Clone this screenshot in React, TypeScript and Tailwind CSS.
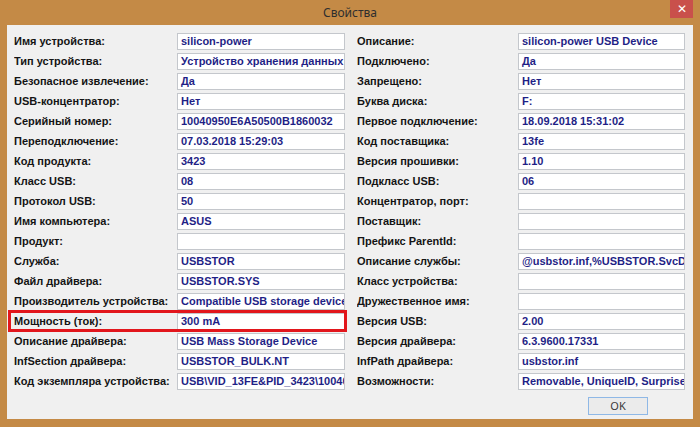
import React from "react";

type Row = { label: string; value: string };

const left: Row[] = [
  { label: "Имя устройства:", value: "silicon-power" },
  { label: "Тип устройства:", value: "Устройство хранения данных" },
  { label: "Безопасное извлечение:", value: "Да" },
  { label: "USB-концентратор:", value: "Нет" },
  { label: "Серийный номер:", value: "10040950E6A50500B1860032" },
  { label: "Переподключение:", value: "07.03.2018 15:29:03" },
  { label: "Код продукта:", value: "3423" },
  { label: "Класс USB:", value: "08" },
  { label: "Протокол USB:", value: "50" },
  { label: "Имя компьютера:", value: "ASUS" },
  { label: "Продукт:", value: "" },
  { label: "Служба:", value: "USBSTOR" },
  { label: "Файл драйвера:", value: "USBSTOR.SYS" },
  { label: "Производитель устройства:", value: "Compatible USB storage device" },
  { label: "Мощность (ток):", value: "300 mA" },
  { label: "Описание драйвера:", value: "USB Mass Storage Device" },
  { label: "InfSection драйвера:", value: "USBSTOR_BULK.NT" },
  { label: "Код экземпляра устройства:", value: "USB\\VID_13FE&PID_3423\\10040950E6A50500B1860032" },
];

const right: Row[] = [
  { label: "Описание:", value: "silicon-power USB Device" },
  { label: "Подключено:", value: "Да" },
  { label: "Запрещено:", value: "Нет" },
  { label: "Буква диска:", value: "F:" },
  { label: "Первое подключение:", value: "18.09.2018 15:31:02" },
  { label: "Код поставщика:", value: "13fe" },
  { label: "Версия прошивки:", value: "1.10" },
  { label: "Подкласс USB:", value: "06" },
  { label: "Концентратор, порт:", value: "" },
  { label: "Поставщик:", value: "" },
  { label: "Префикс ParentId:", value: "" },
  { label: "Описание службы:", value: "@usbstor.inf,%USBSTOR.SvcDesc%" },
  { label: "Класс устройства:", value: "" },
  { label: "Дружественное имя:", value: "" },
  { label: "Версия USB:", value: "2.00" },
  { label: "Версия драйвера:", value: "6.3.9600.17331" },
  { label: "InfPath драйвера:", value: "usbstor.inf" },
  { label: "Возможности:", value: "Removable, UniqueID, SurpriseRemovalOK" },
];

function Field({ row, labelW, boxW, highlight }: { row: Row; labelW: string; boxW: string; highlight?: boolean }) {
  return (
    <div className="relative flex h-[17px] items-center">
      <div className={`${labelW} shrink-0 overflow-hidden whitespace-nowrap text-[11px] font-bold leading-none text-[#141414]`}>{row.label}</div>
      <div
        className={`${boxW} flex h-[17px] shrink-0 items-center overflow-hidden whitespace-nowrap border border-[#c4c7cc] bg-white pl-[3px] text-[11px] font-bold leading-none text-[#1f1f86]`}
      >
        {row.value}
      </div>
      {highlight && (
        <span className="pointer-events-none absolute -bottom-[2px] -left-[6px] -right-[2px] -top-[3px] border-[3px] border-[#e2161c]" />
      )}
    </div>
  );
}

export default function App() {
  return (
    <div className="flex h-[427px] w-[700px] flex-col bg-[#c48a46]" style={{ fontFamily: '"Liberation Sans", Arial, sans-serif' }}>
      <div className="relative flex h-[25px] shrink-0 items-center justify-center">
        <span className="text-[12px] text-[#2e2e2e]" style={{ fontFamily: '"Noto Sans", "Open Sans", sans-serif' }}>
          Свойства
        </span>
        <div className="absolute right-[7px] top-0 flex h-[18px] w-[23px] items-center justify-center bg-[#c9504b] text-[12px] leading-none text-white">
          ✕
        </div>
      </div>
      <div className="mx-[7px] flex h-[394px] w-[686px] flex-col bg-[#f0f0f0] pl-[7px] pr-[8px] pt-[8px]">
        <div className="flex gap-[12px]">
          <div className="flex flex-col gap-[3px]">
            {left.map((r, i) => (
              <Field key={i} row={r} labelW="w-[163px]" boxW="w-[168px]" highlight={i === 14} />
            ))}
          </div>
          <div className="flex flex-col gap-[3px]">
            {right.map((r, i) => (
              <Field key={i} row={r} labelW="w-[161px]" boxW="w-[167px]" />
            ))}
          </div>
        </div>
        <div className="mt-[7px] flex justify-end pr-[37px]">
          <div className="flex h-[18px] w-[60px] items-center justify-center border border-[#8fb8e6] bg-[#ebebeb] text-[11px] text-[#3a3a3a]" style={{ fontFamily: '"Noto Sans", sans-serif' }}>
            OK
          </div>
        </div>
      </div>
    </div>
  );
}
